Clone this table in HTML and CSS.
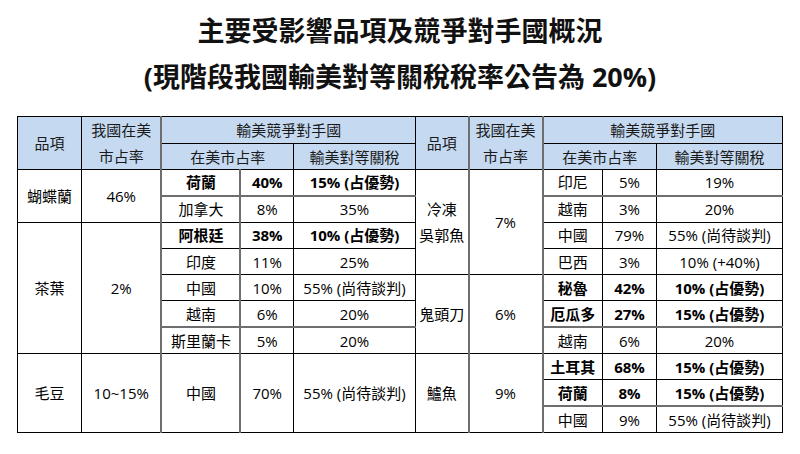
FILE: index.html
```html
<!DOCTYPE html>
<html lang="zh-Hant">
<head>
<meta charset="utf-8">
<link rel="stylesheet" href="styles.css">
</head>
<body>
<h1 class="title">
  <span class="title-line">主要受影響品項及競爭對手國概況</span>
  <span class="title-line">(現階段我國輸美對等關稅稅率公告為 20%)</span>
</h1>
<table class="grid">
  <colgroup>
    <col class="c1"><col class="c2"><col class="c3 gl"><col class="c4 gl"><col class="c5">
    <col class="c6"><col class="c7 gl"><col class="c8 gl"><col class="c9"><col class="c10">
  </colgroup>
  <thead>
    <tr class="h1r">
      <th rowspan="2">品項</th>
      <th rowspan="2" class="two">我國在美<br>市占率</th>
      <th colspan="3">輸美競爭對手國</th>
      <th rowspan="2">品項</th>
      <th rowspan="2" class="two">我國在美<br>市占率</th>
      <th colspan="3">輸美競爭對手國</th>
    </tr>
    <tr class="h2r">
      <th colspan="2">在美市占率</th>
      <th>輸美對等關稅</th>
      <th colspan="2">在美市占率</th>
      <th>輸美對等關稅</th>
    </tr>
  </thead>
  <tbody>
    <tr>
      <td rowspan="2">蝴蝶蘭</td><td rowspan="2">46%</td>
      <td class="b gb">荷蘭</td><td class="b gb">40%</td><td class="b gb">15% (占優勢)</td>
      <td rowspan="4" class="two">冷凍<br>吳郭魚</td><td rowspan="4">7%</td>
      <td class="gb">印尼</td><td class="gb">5%</td><td class="gb">19%</td>
    </tr>
    <tr>
      <td>加拿大</td><td>8%</td><td>35%</td>
      <td>越南</td><td>3%</td><td>20%</td>
    </tr>
    <tr>
      <td rowspan="5">茶葉</td><td rowspan="5">2%</td>
      <td class="b">阿根廷</td><td class="b">38%</td><td class="b">10% (占優勢)</td>
      <td>中國</td><td>79%</td><td>55% (尚待談判)</td>
    </tr>
    <tr>
      <td>印度</td><td>11%</td><td>25%</td>
      <td>巴西</td><td>3%</td><td>10% (+40%)</td>
    </tr>
    <tr>
      <td>中國</td><td>10%</td><td>55% (尚待談判)</td>
      <td rowspan="3">鬼頭刀</td><td rowspan="3">6%</td>
      <td class="b">秘魯</td><td class="b">42%</td><td class="b">10% (占優勢)</td>
    </tr>
    <tr>
      <td class="gb">越南</td><td class="gb">6%</td><td class="gb">20%</td>
      <td class="b gb">厄瓜多</td><td class="b gb">27%</td><td class="b gb">15% (占優勢)</td>
    </tr>
    <tr>
      <td>斯里蘭卡</td><td>5%</td><td>20%</td>
      <td>越南</td><td>6%</td><td>20%</td>
    </tr>
    <tr>
      <td rowspan="3">毛豆</td><td rowspan="3">10~15%</td>
      <td rowspan="3">中國</td><td rowspan="3">70%</td><td rowspan="3">55% (尚待談判)</td>
      <td rowspan="3">鱸魚</td><td rowspan="3">9%</td>
      <td class="b">土耳其</td><td class="b">68%</td><td class="b">15% (占優勢)</td>
    </tr>
    <tr>
      <td class="b gb">荷蘭</td><td class="b gb">8%</td><td class="b gb">15% (占優勢)</td>
    </tr>
    <tr>
      <td>中國</td><td>9%</td><td>55% (尚待談判)</td>
    </tr>
  </tbody>
</table>
</body>
</html>
```

FILE: styles.css
```css
html, body {
  margin: 0;
  padding: 0;
  background: #ffffff;
}

body {
  font-family: "Open Sans", "Noto Sans CJK TC", sans-serif;
  color: #000000;
}

.title {
  margin: 0;
  padding-top: 8px;
  font-family: "Open Sans", "Noto Sans CJK TC", sans-serif;
  font-size: 27px;
  font-weight: 700;
  line-height: 46px;
  text-align: center;
  color: #111111;
}

.title-line {
  display: block;
}

.grid {
  margin: 16px auto 0;
  border-collapse: collapse;
  table-layout: fixed;
  width: 766px;
  font-size: 15px;
  line-height: 18px;
}

.c1 { width: 64px; }
.c2 { width: 80px; }
.c3 { width: 79px; }
.c4 { width: 53px; }
.c5 { width: 122px; }
.c6 { width: 53px; }
.c7 { width: 74px; }
.c8 { width: 60px; }
.c9 { width: 54px; }
.c10 { width: 126px; }

.gl {
  border-left: 2px solid #6e6e6e;
}

.grid th,
.grid td {
  border: 1px solid #000000;
  padding: 0;
  text-align: center;
  vertical-align: middle;
  white-space: nowrap;
}

.grid .two {
  line-height: 26px;
}

.grid th {
  background: #c5d9f1;
  font-weight: 400;
  color: #1a1a1a;
}

.h1r { height: 27px; }
.h2r { height: 26px; }

.grid tbody tr {
  height: 26.3px;
}

.grid td.b {
  font-weight: 700;
}

.grid td.gb {
  border-bottom: 2px solid #6e6e6e;
}
```
